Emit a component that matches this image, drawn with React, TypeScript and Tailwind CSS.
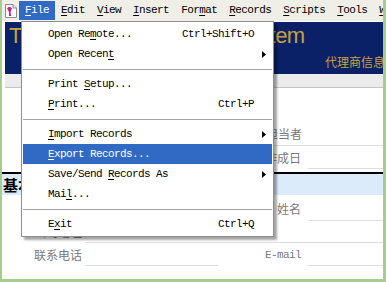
import React from "react";

const mono = "font-['Liberation_Mono',monospace] text-[11px] tracking-[-0.6px]";
const cjk = "font-['Noto_Sans_CJK_SC','Noto_Sans',sans-serif]";

// label with one underlined mnemonic letter
const Mn: React.FC<{ text: string; at: number }> = ({ text, at }) => (
  <span>
    {text.slice(0, at)}
    <span className="underline underline-offset-[2px]">{text[at]}</span>
    {text.slice(at + 1)}
  </span>
);

const Arrow = () => (
  <svg width="4" height="7" viewBox="0 0 4 7" className="absolute right-[6px] top-[7px]">
    <path d="M0 0 L4 3.5 L0 7 Z" fill="#000" />
  </svg>
);

const AppIcon = () => (
  <svg width="16" height="16" viewBox="0 0 16 16">
    <path d="M2.5 1.5 H10 L13.5 5 V14.5 H2.5 Z" fill="#fff" stroke="#8a8a8a" />
    <path d="M10 1.5 V5 H13.5" fill="#e8e8e8" stroke="#8a8a8a" />
    <path d="M4 5 L9 5 L7.5 9 L8 13 L6 13 L6 9 Z" fill="#c0178a" />
    <circle cx="6.5" cy="5.5" r="1.8" fill="#e0218f" />
  </svg>
);

const menuBar = [
  { t: "File", u: 0 },
  { t: "Edit", u: 0 },
  { t: "View", u: 0 },
  { t: "Insert", u: 0 },
  { t: "Format", u: 3 },
  { t: "Records", u: 0 },
  { t: "Scripts", u: 0 },
  { t: "Tools", u: 0 },
  { t: "Window", u: 0 },
];

type Item =
  | { sep: true }
  | { sep?: false; t: string; u: number; key?: string; sub?: boolean; on?: boolean };

const items: Item[] = [
  { t: "Open Remote...", u: 7, key: "Ctrl+Shift+O" },
  { t: "Open Recent", u: 10, sub: true },
  { sep: true },
  { t: "Print Setup...", u: 6 },
  { t: "Print...", u: 0, key: "Ctrl+P" },
  { sep: true },
  { t: "Import Records", u: 0, sub: true },
  { t: "Export Records...", u: 0, on: true },
  { t: "Save/Send Records As", u: 10, sub: true },
  { t: "Mail...", u: 3 },
  { sep: true },
  { t: "Exit", u: 1, key: "Ctrl+Q" },
];

const label = `${cjk} text-[12px] text-[#7a7a7a] leading-none`;

export default function App() {
  return (
    <div className="relative w-[386px] h-[282px] overflow-hidden bg-white border-l-2 border-r-[3px] border-b-[3px] border-[#a6cc8e]">
      {/* Menu bar */}
      <div className={`h-[21px] flex items-center bg-[#efeee7] text-black ${mono}`}>
        <div className="w-[19px] pl-[1px] flex items-center">
          <AppIcon />
        </div>
        {menuBar.map((m, i) => (
          <div
            key={m.t}
            className={`h-[19px] px-[6px] flex items-center whitespace-nowrap ${i === 0 ? "bg-[#316ac5] text-white" : ""}`}
          >
            <Mn text={m.t} at={m.u} />
          </div>
        ))}
      </div>

      {/* Header */}
      <div className="mt-[1px] ml-[3px] h-[52px] bg-[#0b2167] flex flex-col px-[4px] pt-[2px] overflow-hidden">
        <div className="font-['Liberation_Sans',sans-serif] text-[22px] leading-[24px] tracking-[-0.7px] text-[#c8a23c] whitespace-nowrap">
          The Agent Management System
        </div>
        <div className={`${cjk} mt-auto mb-[6px] pl-[316px] text-[12px] leading-none text-[#c8a23c] whitespace-nowrap`}>
          代理商信息管理
        </div>
      </div>
      <div className="ml-[3px] h-[14px] bg-[#ebebeb] border-b border-[#c4c4c4]" />

      {/* Form rows above section */}
      <div className="grid grid-cols-[81px_133px_84px_6px_1fr] ml-[2px] mt-[35px]">
        <div className={`${label} h-[23px] flex items-center pl-[30px]`}>代理商名称</div>
        <div />
        <div className={`${label} h-[23px] flex items-center justify-end col-span-2 pr-[6px] border-b border-[#dedede]`}>担当者</div>
        <div className="border-b border-[#dedede]" />
        <div className={`${label} h-[23px] flex items-center pl-[30px]`}>代理商编号</div>
        <div className="border-b border-[#dedede]" />
        <div className={`${label} h-[23px] flex items-center justify-end pr-[1px]`}>作成日</div>
        <div />
        <div className="border-b border-[#dedede]" />
      </div>

      {/* Section header */}
      <div className="mt-[3px] border-t-2 border-black h-[23px] bg-[#dcebfa] flex items-center pl-[1px]">
        <span className={`${cjk} text-[15px] font-bold text-black leading-none`}>基本情報</span>
      </div>

      {/* Form rows below section */}
      <div className="grid grid-cols-[81px_133px_84px_6px_1fr] ml-[2px]">
        <div className={`${label} h-[26px] flex items-center pl-[30px]`}>代理商名</div>
        <div className="border-b border-[#dedede]" />
        <div className={`${label} h-[26px] flex items-center justify-end pr-[1px] pt-[1px]`}>姓名</div>
        <div />
        <div className="border-b border-[#dedede]" />

        <div className={`${label} h-[22px] flex items-center pl-[30px]`}>公司地址</div>
        <div className="col-span-4 border-b border-[#dedede]" />

        <div className={`${label} h-[23px] flex items-center pl-[30px] pt-[1px]`}>联系电话</div>
        <div className="border-b border-[#dedede]" />
        <div className={`font-['Liberation_Mono',monospace] text-[11px] tracking-[-0.6px] text-[#7a7a7a] h-[23px] flex items-center justify-end pr-[1px] pt-[2px]`}>
          E-mail
        </div>
        <div />
        <div className="border-b border-[#dedede]" />
      </div>

      {/* File dropdown */}
      <div className={`absolute left-[19px] top-[21px] w-[253px] bg-white border border-[#8e8e8e] py-[2px] shadow-[3px_3px_2px_rgba(0,0,0,0.35)] ${mono} text-black`}>
        {items.map((it, i) =>
          it.sep ? (
            <div key={i} className="h-[10px] flex items-center px-[1px]">
              <div className="w-full border-t border-[#a5a5a5]" />
            </div>
          ) : (
            <div
              key={i}
              className={`relative h-[20px] mx-[1px] flex items-center pl-[25px] pr-[18px] whitespace-nowrap ${it.on ? "bg-[#316ac5] text-white" : ""}`}
            >
              <span className="flex-1">
                <Mn text={it.t} at={it.u} />
              </span>
              {it.key && <span>{it.key}</span>}
              {it.sub && <Arrow />}
            </div>
          )
        )}
      </div>
    </div>
  );
}
